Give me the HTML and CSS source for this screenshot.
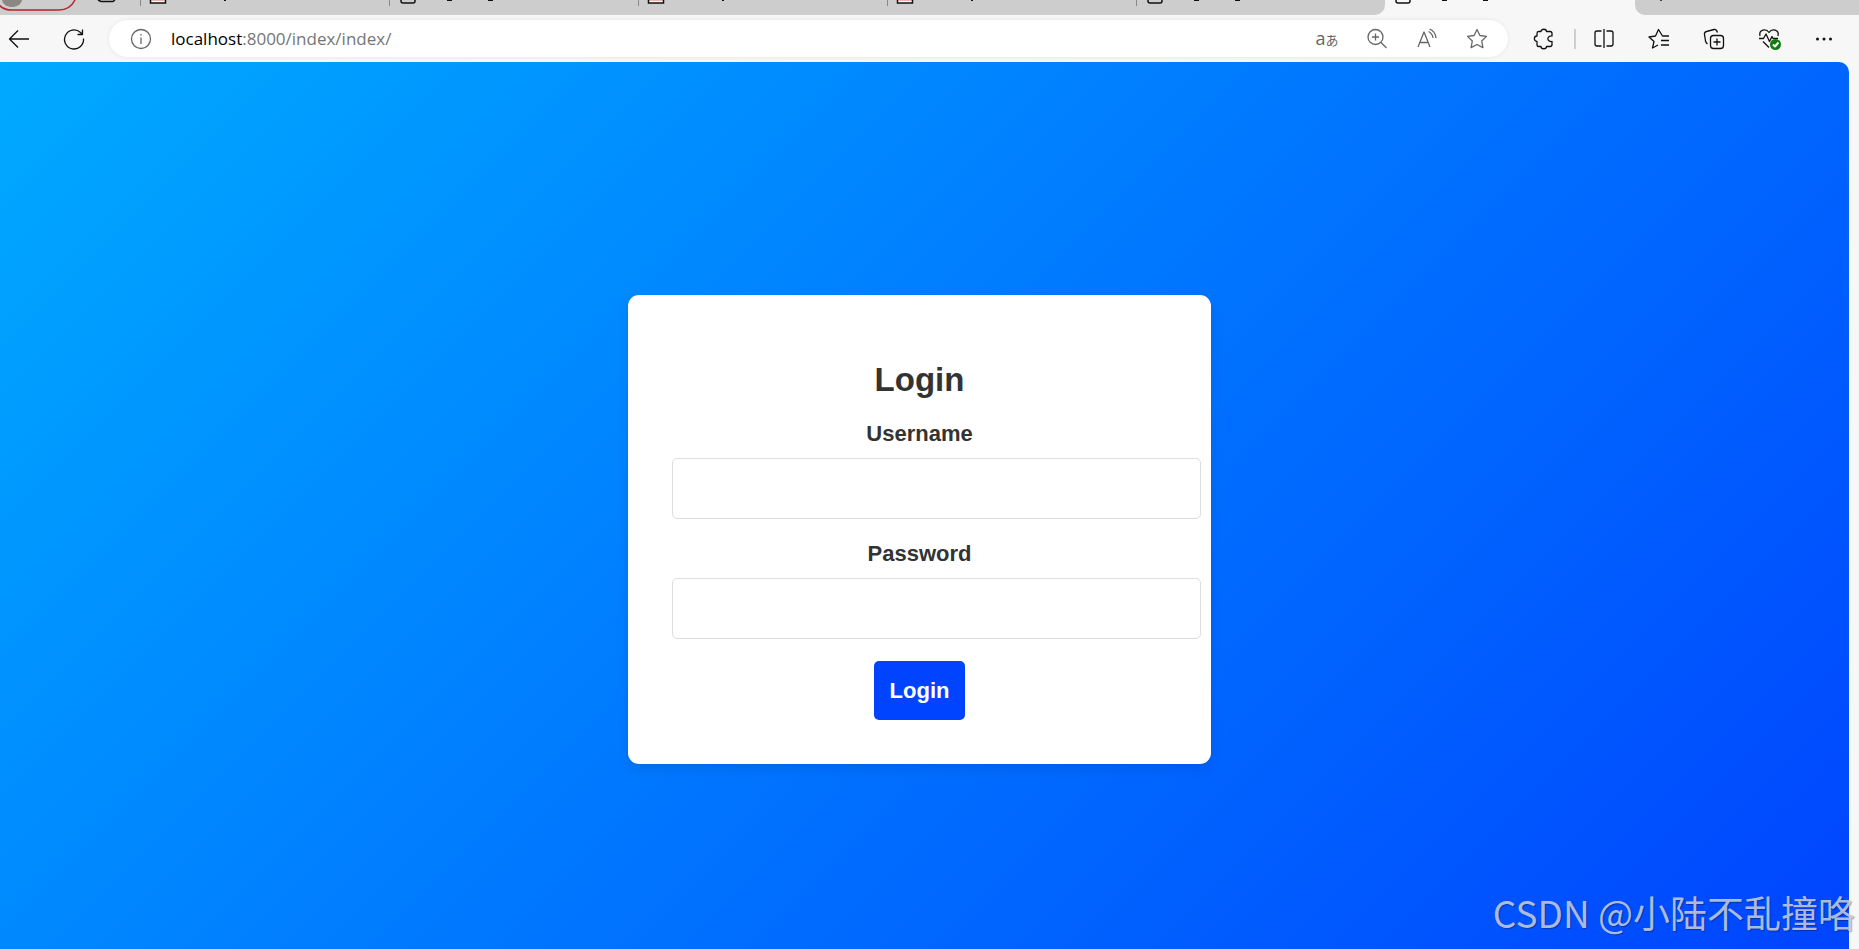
FILE: index.html
```html
<!DOCTYPE html>
<html lang="en">

<head>
    <meta charset="UTF-8">
    <meta name="viewport" content="width=device-width, initial-scale=1.0">
    <title>Login</title>
    <link rel="stylesheet" href="styles.css">
</head>

<body>
    <!-- tab strip -->
    <div class="tabs">
        <div class="tabs-left">
            <div class="profile">
                <svg width="140" height="15" viewBox="0 0 140 15">
                    <path d="M-4 0C-1 7 5 10 12 10h47c8 0 13-4 16-10" fill="none" stroke="#b3262e" stroke-width="1.5" />
                    <path d="M2 0c1 5 6 7 10 7s9-2 10-7z" fill="#8b8785" />
                    <path d="M98 0l3 1.500h12l2-1.500" fill="none" stroke="#111" stroke-width="1.500" />
                </svg>
            </div>
            <div class="tab">
                <svg width="120" height="15" viewBox="0 0 120 15">
                    <path d="M10 0h16v3H10z" fill="#fff" />
                    <path d="M10 0h16v1H10z" fill="#f3b0b0" />
                    <path d="M10.500 0v3h15V0" fill="none" stroke="#111" stroke-width="1.500" />
                    <path d="M85 0v1" stroke="#111" stroke-width="2" />
                </svg>
            </div>
            <div class="tab">
                <svg width="120" height="15" viewBox="0 0 120 15">
                    <path d="M12 0v1q0 2 2 2h10q2 0 2-2V0" fill="none" stroke="#111" stroke-width="1.500" />
                    <path d="M58 .5h5M99 .5h5" stroke="#111" stroke-width="1" />
                </svg>
            </div>
            <div class="tab">
                <svg width="120" height="15" viewBox="0 0 120 15">
                    <path d="M10 0h16v3H10z" fill="#fff" />
                    <path d="M10 0h16v1H10z" fill="#f3b0b0" />
                    <path d="M10.500 0v3h15V0" fill="none" stroke="#111" stroke-width="1.500" />
                    <path d="M85 0v1" stroke="#111" stroke-width="2" />
                </svg>
            </div>
            <div class="tab">
                <svg width="120" height="15" viewBox="0 0 120 15">
                    <path d="M10 0h16v3H10z" fill="#fff" />
                    <path d="M10 0h16v1H10z" fill="#f3b0b0" />
                    <path d="M10.500 0v3h15V0" fill="none" stroke="#111" stroke-width="1.500" />
                    <path d="M85 0v1" stroke="#111" stroke-width="2" />
                </svg>
            </div>
            <div class="tab">
                <svg width="120" height="15" viewBox="0 0 120 15">
                    <path d="M12 0v1q0 2 2 2h10q2 0 2-2V0" fill="none" stroke="#111" stroke-width="1.500" />
                    <path d="M58 .5h5M99 .5h5" stroke="#111" stroke-width="1" />
                </svg>
            </div>
        </div>
        <div class="tab-active">
            <svg width="120" height="15" viewBox="0 0 120 15">
                <path d="M11 0v1q0 2 2 2h10q2 0 2-2V0" fill="none" stroke="#111" stroke-width="1.500" />
                <path d="M57 .5h5M98 .5h5" stroke="#111" stroke-width="1" />
            </svg>
        </div>
        <div class="tabs-right">
            <svg width="60" height="15" viewBox="0 0 60 15">
                <path d="M26 0v1" stroke="#111" stroke-width="1.500" />
            </svg>
        </div>
    </div>

    <!-- toolbar -->
    <div class="toolbar">
        <div class="nav">
            <button class="icon" type="button" aria-label="Back">
                <svg viewBox="0 0 24 24"><path d="M22 12H2.500M11 3.500L2.500 12l8.500 8.500" /></svg>
            </button>
            <button class="icon" type="button" aria-label="Refresh">
                <svg viewBox="0 0 24 24"><path d="M21.500 11.500A9.500 9.500 0 1 1 18.500 5.500L20 7M20.500 2.500V7.500H15.500" /></svg>
            </button>
        </div>
        <div class="address">
            <svg class="info" viewBox="0 0 24 24">
                <circle cx="12" cy="12" r="9.500" />
                <path d="M12 10.500v6.500M12 7v1.500" />
            </svg>
            <a class="url" href="#">localhost<span>:8000/index/index/</span></a>
            <div class="address-icons">
                <button class="icon translate" type="button" aria-label="Translate">a<span>あ</span></button>
                <button class="icon" type="button" aria-label="Zoom">
                    <svg viewBox="0 0 24 24"><circle cx="10.500" cy="10" r="7.500" /><path d="M16 15.500L21.500 21M10.500 6.500v7M7 10h7" /></svg>
                </button>
                <button class="icon" type="button" aria-label="Read aloud">
                    <svg viewBox="0 0 24 24"><path d="M3 20L9 5l6 15M5 15.500h8M13.500 4.500q4 2 4.500 6.500M14.500 2q6 2.500 6.500 9" /></svg>
                </button>
                <button class="icon" type="button" aria-label="Add to favorites">
                    <svg viewBox="0 0 24 24"><path d="M12 2.500l2.900 6 6.600.9-4.800 4.600 1.200 6.600L12 17.500l-5.900 3.100 1.200-6.600L2.500 9.400l6.600-.9z" /></svg>
                </button>
            </div>
        </div>
        <button class="icon dark" type="button" aria-label="Extensions">
            <svg viewBox="0 0 24 24"><path d="M6.500 4.500H9C9 1.500 14.500 1.500 14.500 4.500h3.500q2 0 2 2V9c-5.500-.5-5.500 6 0 5.500V17.500q0 2-2 2h-3.500c0 3-5.500 3-5.500 0H6.500q-1.500 0-1.500-2v-3c-3.500 0-3.500-5.500 0-5.500V6.500q0-2 1.500-2z" /></svg>
        </button>
        <span class="divider"></span>
        <div class="tools">
            <button class="icon dark" type="button" aria-label="Split screen">
                <svg viewBox="0 0 24 24"><path d="M9.500 4H5Q3 4 3 6v11q0 2 2 2h4.500M14.500 4H19q2 0 2 2v11q0 2-2 2h-4.500M12 2v19" /></svg>
            </button>
            <button class="icon dark" type="button" aria-label="Favorites">
                <svg viewBox="0 0 24 24"><path d="M22 9h-6.500l-4-6.500-3 6.500L2 10l5 4.500L5.500 21l5.500-3M14 13.500h8M14 18h8" /></svg>
            </button>
            <button class="icon dark" type="button" aria-label="Collections">
                <svg viewBox="0 0 24 24"><rect x="8.500" y="8.500" width="13" height="13" rx="3" /><path d="M15 11.500v7M11.500 15h7M5.500 17Q4 16 3.500 14L2.500 7.500Q2 5 4.500 4.500L12 2.500q2.500-.5 3.500 3" /></svg>
            </button>
            <button class="icon dark" type="button" aria-label="Browser essentials">
                <svg viewBox="0 0 24 24">
                    <path d="M3 9C1.500 2.500 9 1 12 5.500c3-4.500 10.500-3 9 3.500M2 11.500h4.500L9 7l3.500 7.500L15 9.500l1 2h5M6 14.500l6 6" />
                    <circle class="badge" cx="18.500" cy="17.500" r="5.500" />
                    <path class="tick" d="M16 17.500l2 2 3.500-4" />
                </svg>
            </button>
            <button class="icon dark" type="button" aria-label="Settings and more">
                <svg class="dots" viewBox="0 0 24 24"><circle cx="5.500" cy="12" r="1.500" /><circle cx="12" cy="12" r="1.500" /><circle cx="18.500" cy="12" r="1.500" /></svg>
            </button>
        </div>
    </div>

    <main class="page">
        <form class="login">
            <h1>Login</h1>
            <label for="username">Username</label>
            <input type="text" id="username" name="username">
            <label for="password">Password</label>
            <input type="password" id="password" name="password">
            <button class="login-button" type="submit">Login</button>
        </form>
    </main>

    <div class="watermark">CSDN @小陆不乱撞咯</div>
</body>

</html>
```

FILE: styles.css
```css
body {
    display: flex;
    flex-direction: column;
    height: 100vh;
    margin: 0;
    overflow: hidden;
    background-color: #f7f7f7;
    font-family: "Liberation Sans", Arial, sans-serif;
}

svg {
    display: block;
}

/* tabs */
.tabs {
    display: flex;
    height: 15px;
    flex-shrink: 0;
}

.tabs-left {
    display: flex;
    background-color: #cdcdcd;
    border-bottom-right-radius: 10px;
}

.profile {
    width: 140px;
}

.tab {
    width: 249px;
    background: linear-gradient(#888, #888) no-repeat 0 0 / 1px 6px;
}

.tab-active {
    width: 250px;
}

.tabs-right {
    flex: 1;
    background-color: #cdcdcd;
    border-bottom-left-radius: 10px;
}

/* toolbar */
.toolbar {
    display: flex;
    align-items: center;
    height: 47px;
    flex-shrink: 0;
    box-sizing: border-box;
    padding: 0 23px 0 7px;
}

.nav,
.tools {
    display: flex;
    gap: 31px;
}

.icon {
    width: 24px;
    height: 24px;
    padding: 0;
    border: none;
    background: none;
    color: #666;
}

.nav .icon,
.dark {
    color: #111;
}

.icon svg,
.info {
    width: 24px;
    height: 24px;
    fill: none;
    stroke: currentColor;
    stroke-width: 1.3;
    stroke-linejoin: round;
}

.icon .dots {
    fill: currentColor;
    stroke: none;
}

.badge {
    fill: #107c10;
    stroke: none;
}

.tick {
    stroke: #fff;
    stroke-width: 2;
}

.address {
    display: flex;
    flex: 1;
    align-items: center;
    height: 37px;
    margin: 0 24px 0 23px;
    padding: 0 19px 0 20px;
    box-sizing: border-box;
    border-radius: 19px;
    background-color: #fff;
    box-shadow: 0 0 4px rgba(0, 0, 0, 0.08);
}

.info {
    color: #666;
}

.url {
    flex: 1;
    margin-left: 18px;
    color: #000;
    font-family: "Open Sans", "Noto Sans", sans-serif;
    font-size: 17px;
    text-decoration: none;
}

.url span {
    color: #767676;
}

.address-icons {
    display: flex;
    gap: 26px;
}

.translate {
    font-family: "Open Sans", "Noto Sans CJK JP", sans-serif;
    font-size: 18px;
    line-height: 22px;
    white-space: nowrap;
}

.translate span {
    font-size: 13px;
}

.divider {
    width: 2px;
    height: 20px;
    margin: 0 16px 0 18px;
    background-color: #cfcfcf;
}

/* login page */
.page {
    display: flex;
    flex: 1;
    justify-content: center;
    align-items: center;
    margin-right: 10px;
    padding: 48px 10px 0 0;
    border-top-right-radius: 10px;
    background: linear-gradient(135deg, #00aaff, #0044ff);
}

.login {
    width: 495px;
    padding: 44px;
    border-radius: 11px;
    background-color: #fff;
    box-shadow: 0 4px 12px rgba(0, 0, 0, 0.1);
    color: #333;
    text-align: center;
}

.login h1 {
    margin: 22px 0;
    font-size: 33px;
    line-height: 38px;
}

.login label {
    display: block;
    margin-bottom: 12px;
    font-size: 22px;
    font-weight: bold;
    line-height: 25px;
}

.login input {
    display: block;
    width: 100%;
    height: 25px;
    margin-bottom: 22px;
    padding: 17px 16px;
    border: 1px solid #ddd;
    border-radius: 5px;
    font-size: 22px;
}

.login-button {
    padding: 17px 16px;
    border: none;
    border-radius: 5px;
    background-color: #0044ff;
    color: #fff;
    font-family: inherit;
    font-size: 22px;
    font-weight: bold;
    line-height: 25px;
    vertical-align: top;
    cursor: pointer;
}

.watermark {
    position: absolute;
    right: 4px;
    bottom: 10px;
    color: rgba(205, 210, 225, 0.85);
    font-family: "Noto Sans CJK SC", sans-serif;
    font-size: 37px;
    text-shadow: 1px 1px 1px rgba(0, 0, 0, 0.3);
}
```
